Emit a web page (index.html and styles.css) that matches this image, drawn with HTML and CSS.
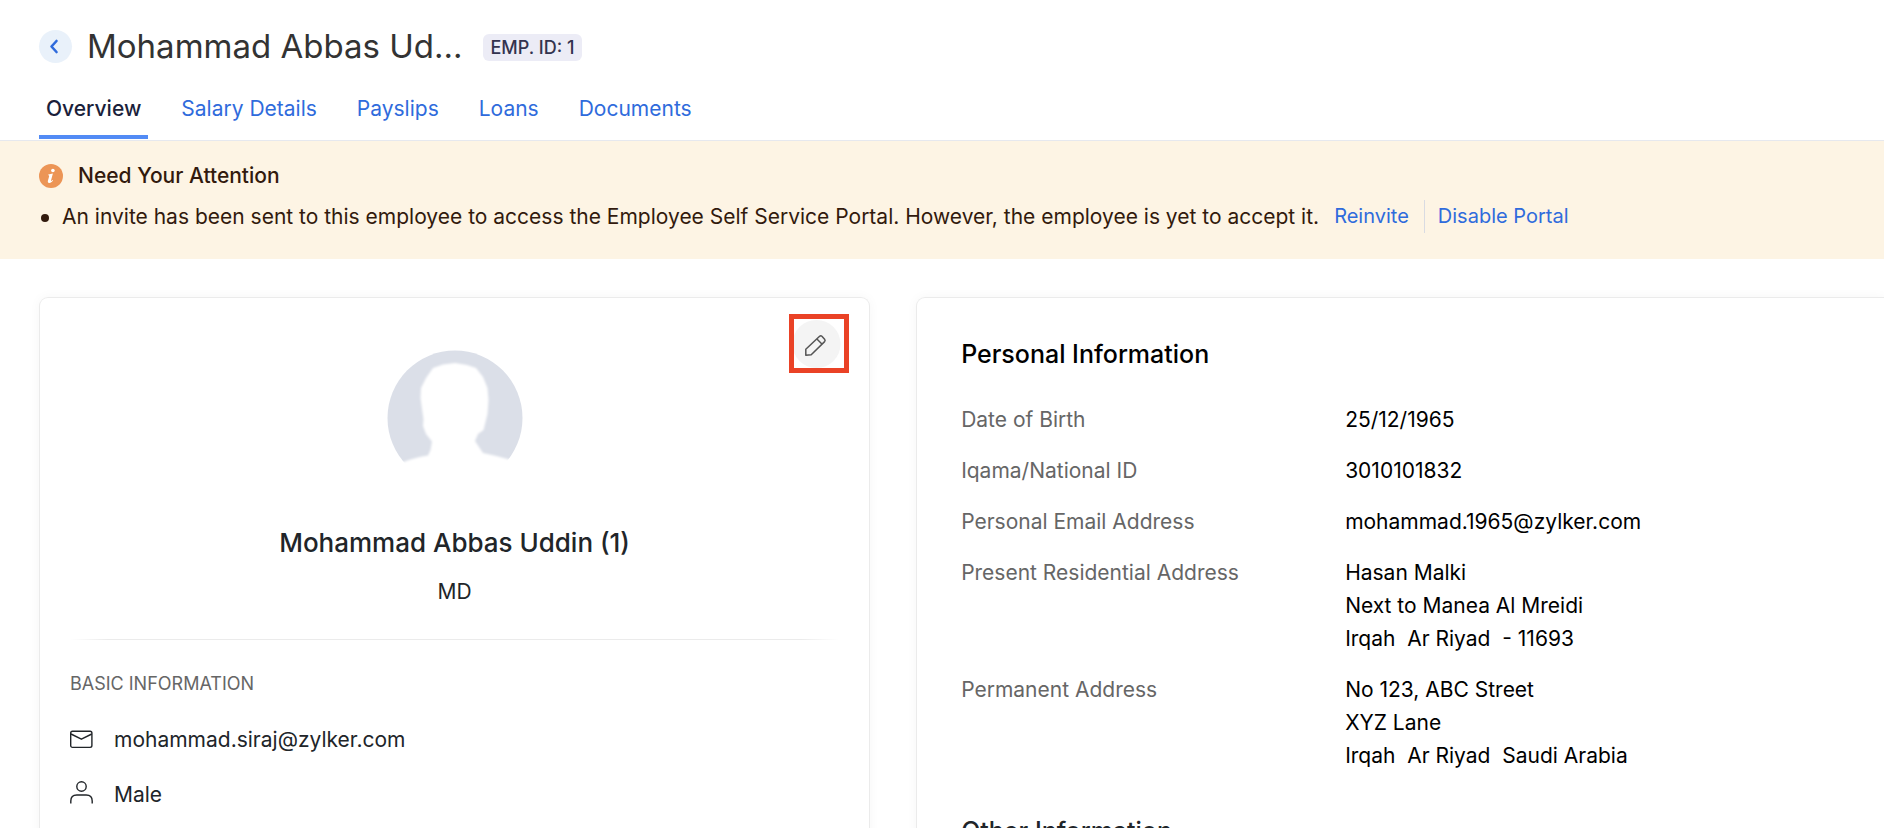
FILE: index.html
```html
<!DOCTYPE html>
<html lang="en">
<head>
<meta charset="utf-8">
<meta name="viewport" content="width=device-width, initial-scale=1">
<title>Employee Overview</title>
<link rel="stylesheet" href="styles.css">
</head>
<body>
<header class="page-header">
  <div class="title-row">
    <button class="back" type="button" aria-label="Back">
      <svg width="15" height="17" viewBox="0 0 15 17" fill="none" stroke="#2f6bdc" stroke-width="2.600" stroke-linecap="round" stroke-linejoin="round"><path d="M8.500 3 3.500 8.500l5 5.500"/></svg>
    </button>
    <h1 class="title">Mohammad Abbas Ud...</h1>
    <span class="badge">EMP. ID: 1</span>
  </div>
  <nav class="tabs">
    <a class="tab tab-active" href="#overview">Overview</a>
    <a class="tab" href="#salary">Salary Details</a>
    <a class="tab" href="#payslips">Payslips</a>
    <a class="tab" href="#loans">Loans</a>
    <a class="tab" href="#documents">Documents</a>
  </nav>
</header>

<section class="notice">
  <h2 class="notice-title">
    <svg class="info-icon" width="24" height="24" viewBox="0 0 24 24"><circle cx="12" cy="12" r="12" fill="#ec9556"/><circle cx="13.900" cy="6.500" r="1.800" fill="#fff"/><path d="M9.300 10.600c1.600-.3 3-.8 4.600-1.100l-1.900 7c-.2.9.4.7 1.600-.5l.5.5c-1.300 1.700-2.600 2.500-3.900 2.400-1.300-.1-1.600-.9-1.300-2.100l1.200-4.400c.2-.9-.1-1.100-1-1.200z" fill="#fff"/></svg>
    Need Your Attention
  </h2>
  <ul class="notice-list">
    <li class="notice-item">
      <span class="notice-text">An invite has been sent to this employee to access the Employee Self Service Portal. However, the employee is yet to accept it.</span>
      <a class="notice-link" href="#reinvite">Reinvite</a>
      <a class="notice-link notice-link-split" href="#disable">Disable Portal</a>
    </li>
  </ul>
</section>

<main class="content">
  <section class="card profile">
    <button class="edit" type="button" aria-label="Edit">
      <svg width="60" height="59" viewBox="0 0 60 59" fill="none"><circle cx="27.500" cy="30" r="24" fill="#f4f4f4"/><rect x="2.500" y="2.500" width="55" height="54" stroke="#ea4226" stroke-width="5"/><g stroke="#555" stroke-width="1.500" stroke-linejoin="round"><path d="M16.800 41.200V35.200L30.600 22.300Q31.800 21.300 32.900 22.300L35.600 25.300Q36.600 26.500 35.600 27.600L22.200 40.700z"/><path d="M27.900 24.900 32.900 30.100"/></g></svg>
    </button>
    <svg class="avatar" width="136" height="136" viewBox="0 0 136 136"><defs><filter id="soft" x="-10%" y="-10%" width="120%" height="120%"><feGaussianBlur stdDeviation="1"/></filter></defs><circle cx="68" cy="68" r="67.500" fill="#dbdfe8"/><path filter="url(#soft)" fill="#fff" d="M-4 118 16.500 112Q29 107 41 105.500L43.500 100 45 91.500 39 84 36 76 36.500 69 35 59 33.500 48 34 38 39 28 46 18 56 14.500 68 13 80 15 89 18 96 27 100.500 38 101.500 50 100.500 64 96.500 80 91 84 88 91 96 103Q108 105.500 120.500 109L142 115V142H-4z"/></svg>
    <h2 class="name">Mohammad Abbas Uddin (1)</h2>
    <p class="role">MD</p>
    <div class="divider"></div>
    <h3 class="subheading">BASIC INFORMATION</h3>
    <ul class="basics">
      <li class="basic">
        <svg width="23" height="23" viewBox="0 0 23 23" fill="none" stroke="#212529" stroke-width="1.400" stroke-linejoin="round"><rect x=".7" y="3.200" width="21.200" height="16.200" rx="1.800"/><path d="M1 6l10.400 5.200L21.800 6"/></svg>
        mohammad.siraj@zylker.com
      </li>
      <li class="basic">
        <svg width="23" height="27" viewBox="0 0 23 27" fill="none" stroke="#212529" stroke-width="1.400"><circle cx="11.500" cy="5.500" r="4.700"/><path d="M.8 22.500v-2.500Q.8 14 6.800 14h9.400q6 0 6 6v2.500"/></svg>
        Male
      </li>
    </ul>
  </section>

  <section class="card details">
    <h2 class="section-title">Personal Information</h2>
    <dl class="fields">
      <dt>Date of Birth</dt><dd>25/12/1965</dd>
      <dt>Iqama/National ID</dt><dd>3010101832</dd>
      <dt>Personal Email Address</dt><dd>mohammad.1965@zylker.com</dd>
      <dt>Present Residential Address</dt><dd>Hasan Malki<br>Next to Manea Al Mreidi<br>Irqah&nbsp; Ar Riyad&nbsp; - 11693</dd>
      <dt>Permanent Address</dt><dd>No 123, ABC Street<br>XYZ Lane<br>Irqah&nbsp; Ar Riyad&nbsp; Saudi Arabia</dd>
    </dl>
    <h2 class="section-title section-title-soft">Other Information</h2>
  </section>
</main>
</body>
</html>
```

FILE: styles.css
```css
* {
  box-sizing: border-box;
}

html,
body {
  height: 100%;
}

body {
  margin: 0;
  display: flex;
  flex-direction: column;
  overflow: hidden;
  background: #fff;
  color: #212529;
  font: 400 21px/33px Inter, "Liberation Sans", sans-serif;
}

h1, h2, h3, p, ul, dl, dd {
  margin: 0;
  padding: 0;
}

ul {
  list-style: none;
}

a {
  color: #2f6bdc;
  text-decoration: none;
}

button {
  padding: 0;
  border: 0;
  background: none;
  cursor: pointer;
}

svg {
  display: block;
  flex: none;
}

.page-header {
  flex: none;
  padding: 24px 39px 1px;
  border-bottom: 1px solid #e6e8ee;
}

.title-row {
  display: flex;
  align-items: center;
}

.back {
  display: grid;
  place-items: center;
  width: 33px;
  height: 33px;
  border-radius: 50%;
  background: #e9f1fa;
}

.title {
  margin: 0 20px 0 15px;
  color: #333;
  font-size: 33px;
  font-weight: 400;
  line-height: 44px;
}

.badge {
  margin-top: 3px;
  padding: 0 8px;
  border-radius: 6px;
  background: #ececf6;
  color: #33334f;
  font-size: 18px;
  font-weight: 500;
  line-height: 27px;
}

.tabs {
  display: flex;
  gap: 26px;
  margin-top: 24px;
}

.tab {
  padding: 0 7px 10px;
  border-bottom: 4px solid transparent;
}

.tab-active {
  border-color: #528bf5;
  color: #1b1f3b;
  font-weight: 500;
}

.notice {
  flex: none;
  padding: 18px 39px 26px;
  background: #fdf4e4;
  color: #321a0d;
}

.notice-title {
  display: flex;
  align-items: center;
  gap: 15px;
  font-size: 21px;
  font-weight: 500;
}

.notice-list {
  margin-top: 8px;
}

.notice-item {
  display: flex;
  align-items: center;
}

.notice-item::before {
  content: "";
  width: 8px;
  height: 8px;
  margin: 2px 13px 0 2px;
  border-radius: 50%;
  background: #321a0d;
}

.notice-link {
  margin-left: 15px;
  font-size: 20px;
}

.notice-link-split {
  padding-left: 13px;
  border-left: 1px solid #d9dbe2;
}

.content {
  flex: 1;
  min-height: 0;
  display: grid;
  grid-template-columns: 231fr 269fr;
  gap: 46px;
  padding: 38px 0 0 39px;
}

.card {
  border: 1px solid #ebebeb;
  border-bottom: 0;
  border-radius: 9px 9px 0 0;
  box-shadow: 0 0 12px rgba(0, 0, 0, 0.04);
}

.profile {
  position: relative;
  padding: 52px 30px 0;
}

.edit {
  position: absolute;
  top: 16px;
  right: 20px;
}

.avatar {
  margin: 0 auto;
}

.name {
  margin-top: 40px;
  font-size: 26px;
  font-weight: 500;
  text-align: center;
}

.role {
  margin-top: 16px;
  text-align: center;
}

.divider {
  height: 1px;
  margin: 31px 0 27px;
  background: linear-gradient(90deg, transparent, #ebebeb 5%, #ebebeb 95%, transparent);
}

.subheading {
  color: #666;
  font-size: 18px;
  font-weight: 400;
}

.basics {
  display: grid;
  gap: 22px;
  margin-top: 23px;
}

.basic {
  display: flex;
  align-items: center;
  gap: 21px;
}

.details {
  border-right: 0;
  border-top-right-radius: 0;
  padding: 40px 44px 0;
  color: #000;
}

.section-title {
  font-size: 25px;
  font-weight: 500;
}

.section-title-soft {
  margin-top: 43px;
  color: #212529;
}

.fields {
  display: grid;
  grid-template-columns: 384px 1fr;
  row-gap: 18px;
  margin-top: 32px;
}

.fields dt {
  color: #666;
}
```
